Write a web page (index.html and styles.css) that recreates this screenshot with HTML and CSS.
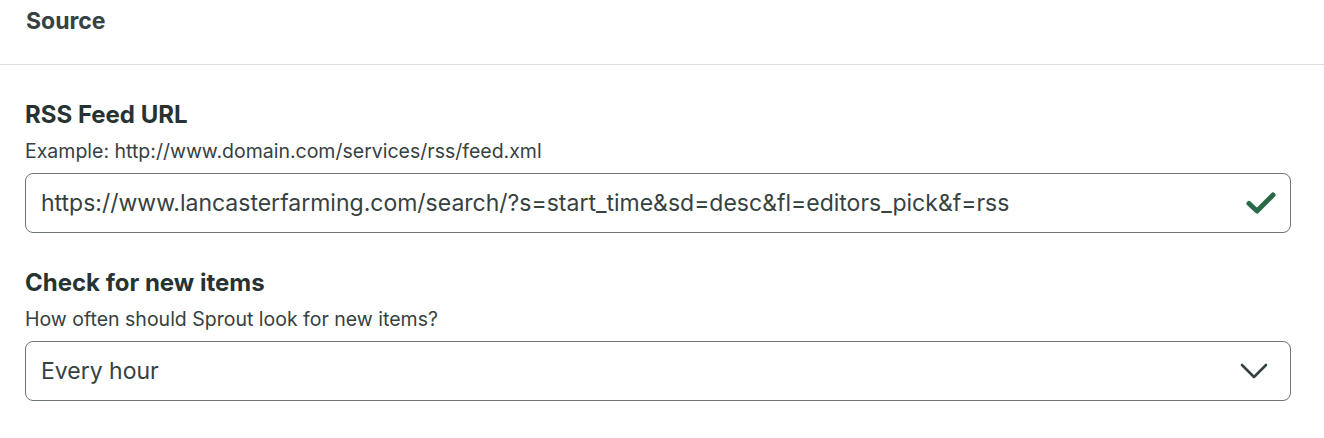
FILE: index.html
```html
<!DOCTYPE html>
<html>
<head>
<meta charset="utf-8">
<link rel="stylesheet" href="styles.css">
</head>
<body>
<div class="panel">
  <div class="panel-header">
    <h2 class="panel-title">Source</h2>
  </div>
  <div class="panel-body">
    <div class="field">
      <div class="field-label">RSS Feed URL</div>
      <div class="field-help">Example: http://www.domain.com/services/rss/feed.xml</div>
      <div class="input-box">
        <span class="input-value">https://www.lancasterfarming.com/search/?s=start_time&amp;sd=desc&amp;fl=editors_pick&amp;f=rss</span>
        <svg class="icon-check" width="30" height="22" viewBox="0 0 30 22"><path d="M3 11.5 L11 19 L27 3" fill="none" stroke="#2b6a48" stroke-width="5" stroke-linecap="round" stroke-linejoin="round"/></svg>
      </div>
    </div>
    <div class="field">
      <div class="field-label">Check for new items</div>
      <div class="field-help">How often should Sprout look for new items?</div>
      <div class="input-box select-box">
        <span class="input-value">Every hour</span>
        <svg class="icon-chevron" width="28" height="16" viewBox="0 0 28 16"><path d="M2 2 L14 14 L26 2" fill="none" stroke="#364141" stroke-width="2.6" stroke-linecap="round" stroke-linejoin="round"/></svg>
      </div>
    </div>
  </div>
</div>
</body>
</html>
```

FILE: styles.css
```css
html, body {
  margin: 0;
  padding: 0;
  background: #ffffff;
}
body {
  font-family: Inter, "Liberation Sans", sans-serif;
  color: #273333;
}
.panel {
  width: 1324px;
}
.panel-header {
  height: 65px;
  border-bottom: 1px solid #dedede;
  padding: 0 26px;
  box-sizing: border-box;
}
.panel-title {
  margin: 0;
  padding-top: 7px;
  font-size: 23px;
  font-weight: 700;
  line-height: 28px;
  color: #364141;
}
.panel-body {
  padding: 36px 33px 0 25px;
}
.field {
  margin-bottom: 36px;
}
.field-label {
  font-size: 24px;
  font-weight: 700;
  line-height: 28px;
  color: #273333;
}
.field-help {
  margin-top: 10px;
  font-size: 19.5px;
  line-height: 24px;
  color: #364141;
}
.input-box {
  margin-top: 10px;
  height: 60px;
  box-sizing: border-box;
  border: 1px solid #6e7675;
  border-radius: 8px;
  display: flex;
  align-items: center;
  justify-content: space-between;
  padding: 0 14px 0 15px;
}
.input-value {
  font-size: 23px;
  color: #364141;
}
.icon-check {
  margin-right: 0;
}
.icon-chevron {
  margin-right: 8px;
}
```
